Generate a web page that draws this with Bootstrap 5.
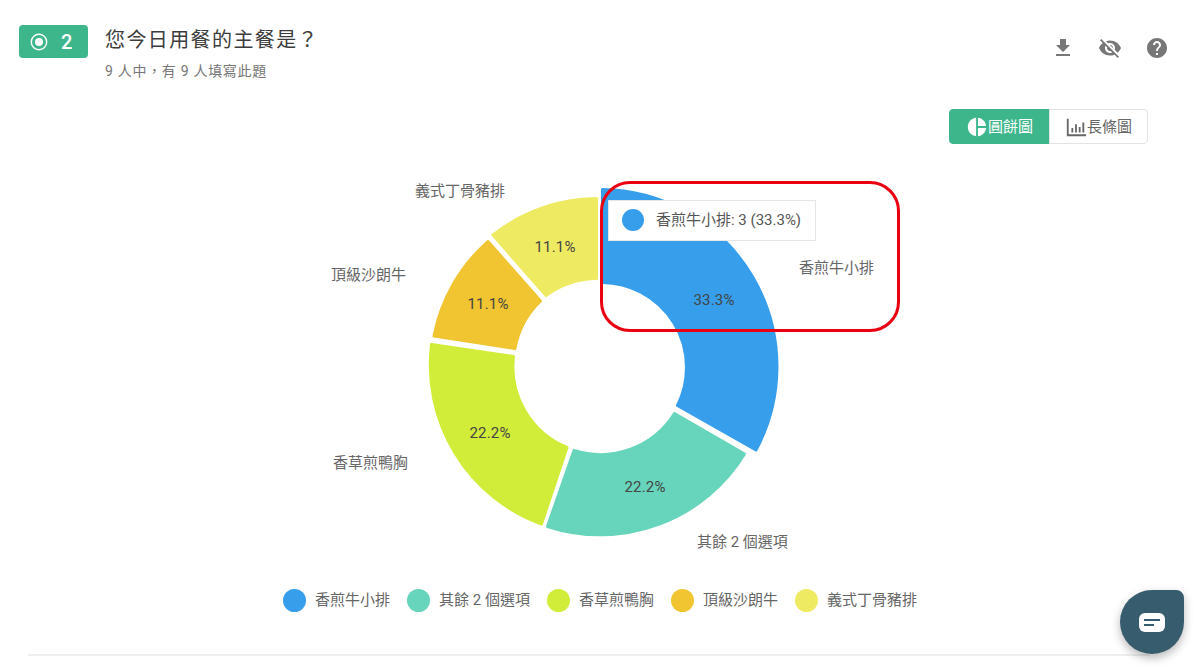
<!DOCTYPE html>
<html lang="zh-Hant">
<head>
<meta charset="utf-8">
<title>您今日用餐的主餐是？</title>
<link rel="stylesheet" href="https://cdn.jsdelivr.net/npm/bootstrap@5.3.0/dist/css/bootstrap.min.css">
<style>
html,body{height:668px;overflow:hidden;background:#fff}
body{font-family:Roboto,"Noto Sans CJK TC",sans-serif;color:#444}
.page-wrap{position:relative;height:668px;padding:25px 52px 0 19px}
.q-head{height:60px}
.q-badge{width:69px;height:33px;background:#3eb68c;border-radius:4px;color:#fff;font-size:20px;font-weight:500;gap:13px;padding-left:11px}
.q-text{margin-left:17px}
.q-title{font-size:20px;line-height:30px;letter-spacing:1.4px;color:#3c3c3c;font-weight:400;margin:0}
.q-sub{font-size:14px;line-height:20px;letter-spacing:.7px;color:#777;margin-top:6px}
.tool-icons{gap:23px;margin-right:-21px;margin-top:11px}
.tool-icons svg{width:24px;height:24px;fill:#777;display:block}
.view-row{margin-top:24px}
.view-btn{height:35px;font-size:15px;line-height:20px;padding:0;display:flex;align-items:center;justify-content:center;gap:0;border-radius:4px}
.view-on,.view-on:hover{width:101px;background:#3eb68c;border:1px solid #3eb68c;color:#fff}
.view-off,.view-off:hover{width:99px;background:#fff;border:1px solid #e3e3e3;color:#666}
.view-btn svg{width:22px;height:22px;fill:currentColor}
.chart-box{position:relative;height:444px;margin:0 -52px 0 -19px}
.chart-box svg{display:block;width:1200px;height:416px}
.lbl{font-size:15px;fill:#666}
.pct{font-size:15px;letter-spacing:.2px;fill:#444;text-anchor:middle}
.chart-tip{position:absolute;left:608px;top:56px;width:208px;height:41px;background:#fff;border:1px solid #e6e6e6;font-size:15px;line-height:39px;padding-left:47px;color:#555;white-space:nowrap}
.chart-tip i{position:absolute;left:13px;top:8px;width:22px;height:22px;border-radius:50%;background:#379eec}
.red-note{position:absolute;left:600px;top:37px;width:300px;height:151px;border:3px solid #ea0010;border-radius:30px}
.key-row{margin:0 -52px 0 -19px;height:24px;font-size:15px;color:#666;line-height:24px}
.key-item{gap:9px;margin-right:17px}
.key-item:last-child{margin-right:0}
.key-dot{width:23px;height:23px;border-radius:50%;display:block}
.foot-line{height:2px;background:#eeeeee;margin:42px -2px 0 9px}
.chat-fab{position:absolute;left:1120px;top:590px;width:64px;height:64px;background:#375c6e;border-radius:50% 8px 50% 50%;box-shadow:0 4px 10px rgba(0,0,0,.28)}
.chat-fab svg{width:26px;height:19px;display:block}
</style>
</head>
<body>
<div class="page-wrap">
  <div class="q-head d-flex align-items-start">
    <div class="q-badge d-flex align-items-center flex-shrink-0">
      <svg width="18" height="18" viewBox="0 0 18 18"><circle cx="9" cy="9" r="7.7" fill="none" stroke="#fff" stroke-width="1.4"/><circle cx="9" cy="9" r="4" fill="#fff"/></svg>
      <span>2</span>
    </div>
    <div class="q-text flex-grow-1">
      <h1 class="q-title">您今日用餐的主餐是？</h1>
      <div class="q-sub">9 人中，有 9 人填寫此題</div>
    </div>
    <div class="tool-icons d-flex">
      <svg viewBox="0 0 24 24"><path d="M19 9h-4V3H9v6H5l7 7 7-7zM5 18v2h14v-2H5z"/></svg>
      <svg viewBox="0 0 24 24"><path d="M12 7c2.76 0 5 2.24 5 5 0 .65-.13 1.26-.36 1.83l2.92 2.92c1.51-1.26 2.7-2.89 3.43-4.75-1.73-4.39-6-7.5-11-7.5-1.4 0-2.74.25-3.98.7l2.16 2.16C10.74 7.13 11.35 7 12 7zM2 4.27l2.28 2.28.46.46C3.08 8.3 1.78 10.02 1 12c1.73 4.39 6 7.5 11 7.5 1.55 0 3.03-.3 4.38-.84l.42.42L19.73 22 21 20.73 3.27 3 2 4.27zM7.53 9.8l1.55 1.55c-.05.21-.08.43-.08.65 0 1.66 1.34 3 3 3 .22 0 .44-.03.65-.08l1.55 1.55c-.67.33-1.41.53-2.2.53-2.76 0-5-2.24-5-5 0-.79.2-1.53.53-2.2zm4.31-.78l3.15 3.15.02-.16c0-1.66-1.34-3-3-3l-.17.01z"/></svg>
      <svg viewBox="0 0 24 24"><path d="M12 2C6.48 2 2 6.48 2 12s4.48 10 10 10 10-4.48 10-10S17.52 2 12 2zm1 17h-2v-2h2v2zm2.07-7.75l-.9.92C13.45 12.9 13 13.5 13 15h-2v-.5c0-1.1.45-2.1 1.17-2.83l1.24-1.26c.37-.36.59-.86.59-1.41 0-1.1-.9-2-2-2s-2 .9-2 2H8c0-2.21 1.79-4 4-4s4 1.79 4 4c0 .88-.36 1.68-.93 2.25z"/></svg>
    </div>
  </div>
  <div class="view-row d-flex justify-content-end">
    <div class="btn-group" role="group">
      <button type="button" class="btn view-btn view-on"><svg viewBox="0 0 24 24"><path d="M11 2v20c-5.07-.5-9-4.79-9-10s3.93-9.5 9-10zm2.03 0v8.99H22c-.47-4.74-4.24-8.52-8.97-8.99zm0 11.01V22c4.74-.47 8.5-4.25 8.97-8.99h-8.97z"/></svg>圓餅圖</button>
      <button type="button" class="btn view-btn view-off"><svg viewBox="0 0 24 24"><path d="M2 3h2v17h19v2H2zM7 13h2v5H7zM11 9h2v9h-2zM15 12h2v6h-2zM19 7h2v11h-2z"/></svg>長條圖</button>
    </div>
  </div>
  <div class="chart-box">
    <svg viewBox="0 144 1200 416">
      <g stroke-width="3" stroke-linejoin="round">
        <path fill="#379eec" stroke="#379eec" d="M602.5 189.5A177 177 0 0 1 756 450L677.5 405.5A85 85 0 0 0 602.5 282.5Z"/>
        <path fill="#66d5bb" stroke="#66d5bb" d="M674.5 413.5L744.5 454A169.5 169.5 0 0 1 547.5 526.5L574 450.5A87.5 87.5 0 0 0 674.5 413.5Z"/>
        <path fill="#d2ec3a" stroke="#d2ec3a" d="M431.5 344.5A169.5 169.5 0 0 0 541.5 524L567 447.5A87.5 87.5 0 0 1 513.5 356.5Z"/>
        <path fill="#f0c531" stroke="#f0c531" d="M488 241.5L540.5 301A87.5 87.5 0 0 0 515 348.5L434 336A169.5 169.5 0 0 1 488 241.5Z"/>
        <path fill="#eeea62" stroke="#eeea62" d="M493 235A169.5 169.5 0 0 1 596.5 198.5L596.5 278.5A87.5 87.5 0 0 0 546 295.5Z"/>
      </g>
      <text class="pct" x="714" y="305">33.3%</text>
      <text class="pct" x="645" y="492">22.2%</text>
      <text class="pct" x="490" y="438">22.2%</text>
      <text class="pct" x="488" y="309">11.1%</text>
      <text class="pct" x="555" y="252">11.1%</text>
      <text class="lbl" x="799" y="273">香煎牛小排</text>
      <text class="lbl" x="697" y="547">其餘 2 個選項</text>
      <text class="lbl" x="333" y="468">香草煎鴨胸</text>
      <text class="lbl" x="331" y="280">頂級沙朗牛</text>
      <text class="lbl" x="415" y="196">義式丁骨豬排</text>
    </svg>
    <div class="chart-tip"><i></i>香煎牛小排: 3 (33.3%)</div>
    <div class="red-note"></div>
  </div>
  <div class="key-row d-flex justify-content-center align-items-center">
    <div class="key-item d-flex align-items-center"><span class="key-dot" style="background:#379eec"></span><span>香煎牛小排</span></div>
    <div class="key-item d-flex align-items-center"><span class="key-dot" style="background:#66d5bb"></span><span>其餘 2 個選項</span></div>
    <div class="key-item d-flex align-items-center"><span class="key-dot" style="background:#d2ec3a"></span><span>香草煎鴨胸</span></div>
    <div class="key-item d-flex align-items-center"><span class="key-dot" style="background:#f0c531"></span><span>頂級沙朗牛</span></div>
    <div class="key-item d-flex align-items-center"><span class="key-dot" style="background:#eeea62"></span><span>義式丁骨豬排</span></div>
  </div>
  <div class="foot-line"></div>
  <div class="chat-fab d-flex align-items-center justify-content-center">
    <svg viewBox="0 0 26 19"><rect width="26" height="19" rx="6" fill="#fff"/><rect x="5" y="6" width="16" height="2" fill="#375c6e"/><rect x="5" y="11" width="10" height="2" fill="#375c6e"/></svg>
  </div>
</div>
<script src="https://cdn.jsdelivr.net/npm/bootstrap@5.3.0/dist/js/bootstrap.bundle.min.js"></script>
</body>
</html>
